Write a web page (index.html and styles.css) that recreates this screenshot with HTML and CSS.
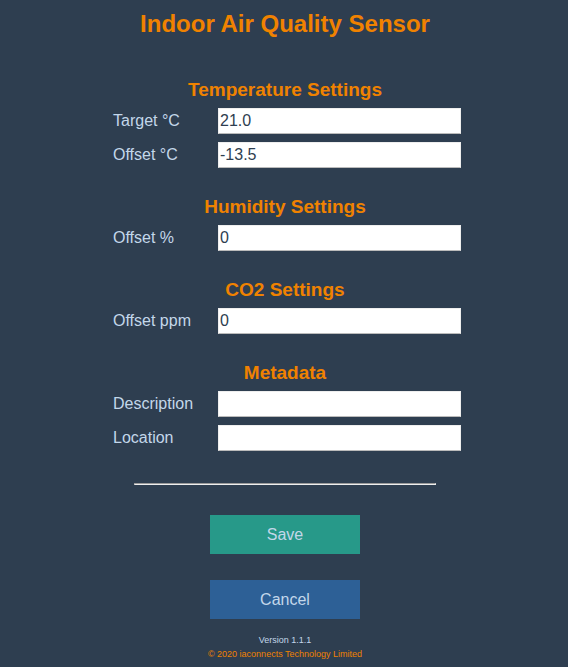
FILE: index.html
```
<!DOCTYPE html>
<html lang="en">
<head>
<meta charset="utf-8">
<meta name="viewport" content="width=device-width, initial-scale=1">
<title>Indoor Air Quality Sensor</title>
<link rel="stylesheet" href="styles.css">
</head>
<body>
<main class="page">
  <h1 class="title">Indoor Air Quality Sensor</h1>
  <form class="settings">
    <section class="group">
      <h2 class="group-title">Temperature Settings</h2>
      <div class="row"><label for="target">Target °C</label><input id="target" type="text" value="21.0"></div>
      <div class="row"><label for="temp-offset">Offset °C</label><input id="temp-offset" type="text" value="-13.5"></div>
    </section>
    <section class="group">
      <h2 class="group-title">Humidity Settings</h2>
      <div class="row"><label for="humidity-offset">Offset %</label><input id="humidity-offset" type="text" value="0"></div>
    </section>
    <section class="group">
      <h2 class="group-title">CO2 Settings</h2>
      <div class="row"><label for="co2-offset">Offset ppm</label><input id="co2-offset" type="text" value="0"></div>
    </section>
    <section class="group">
      <h2 class="group-title">Metadata</h2>
      <div class="row"><label for="description">Description</label><input id="description" type="text"></div>
      <div class="row"><label for="location">Location</label><input id="location" type="text"></div>
    </section>
    <hr class="divider">
    <div class="actions">
      <button class="button save" type="submit">Save</button>
      <button class="button cancel" type="button">Cancel</button>
    </div>
  </form>
  <footer class="footer">
    <p class="version">Version 1.1.1</p>
    <p class="copyright">© 2020 iaconnects Technology Limited</p>
  </footer>
</main>
</body>
</html>
```

FILE: styles.css
```
* {
  box-sizing: border-box;
}

body {
  margin: 0;
  background: #2e3e50;
  color: #c3d7ea;
  font: 16px/18px "Liberation Sans", Arial, sans-serif;
}

.page {
  padding: 8px 8px 6px 10px;
  text-align: center;
}

.title {
  margin: 0 0 36px;
  color: #f08200;
  font-size: 24px;
  line-height: 32px;
}

.settings {
  display: flex;
  flex-direction: column;
  align-items: center;
}

.group {
  width: 100%;
  max-width: 352px;
  margin-bottom: 17px;
}

.group-title {
  margin: 0 0 4px;
  color: #f08200;
  font-size: 19px;
  line-height: 28px;
}

.row {
  display: grid;
  grid-template-columns: 105px 1fr;
  align-items: center;
  padding-left: 4px;
  margin-bottom: 8px;
  text-align: left;
}

.row input {
  width: 100%;
  height: 26px;
  padding: 1px;
  border: 1px solid #eeeeee;
  border-bottom-color: #bbbbbb;
  border-radius: 0;
  background: #ffffff;
  color: #2e3e50;
  font: inherit;
}

.divider {
  width: 302px;
  max-width: 100%;
  margin: 7px 0 30px;
  border: 1px solid;
  border-color: #9a9a9a #eeeeee #eeeeee #9a9a9a;
}

.actions {
  display: flex;
  flex-direction: column;
  gap: 26px;
}

.button {
  width: 150px;
  height: 39px;
  padding: 0;
  border: 0;
  color: #c3d7ea;
  font: inherit;
}

.save {
  background: #279989;
}

.cancel {
  background: #2d6096;
}

.footer {
  margin-top: 14px;
  font-size: 9px;
  line-height: 14px;
}

.footer p {
  margin: 0;
}

.copyright {
  color: #f08200;
}
```
